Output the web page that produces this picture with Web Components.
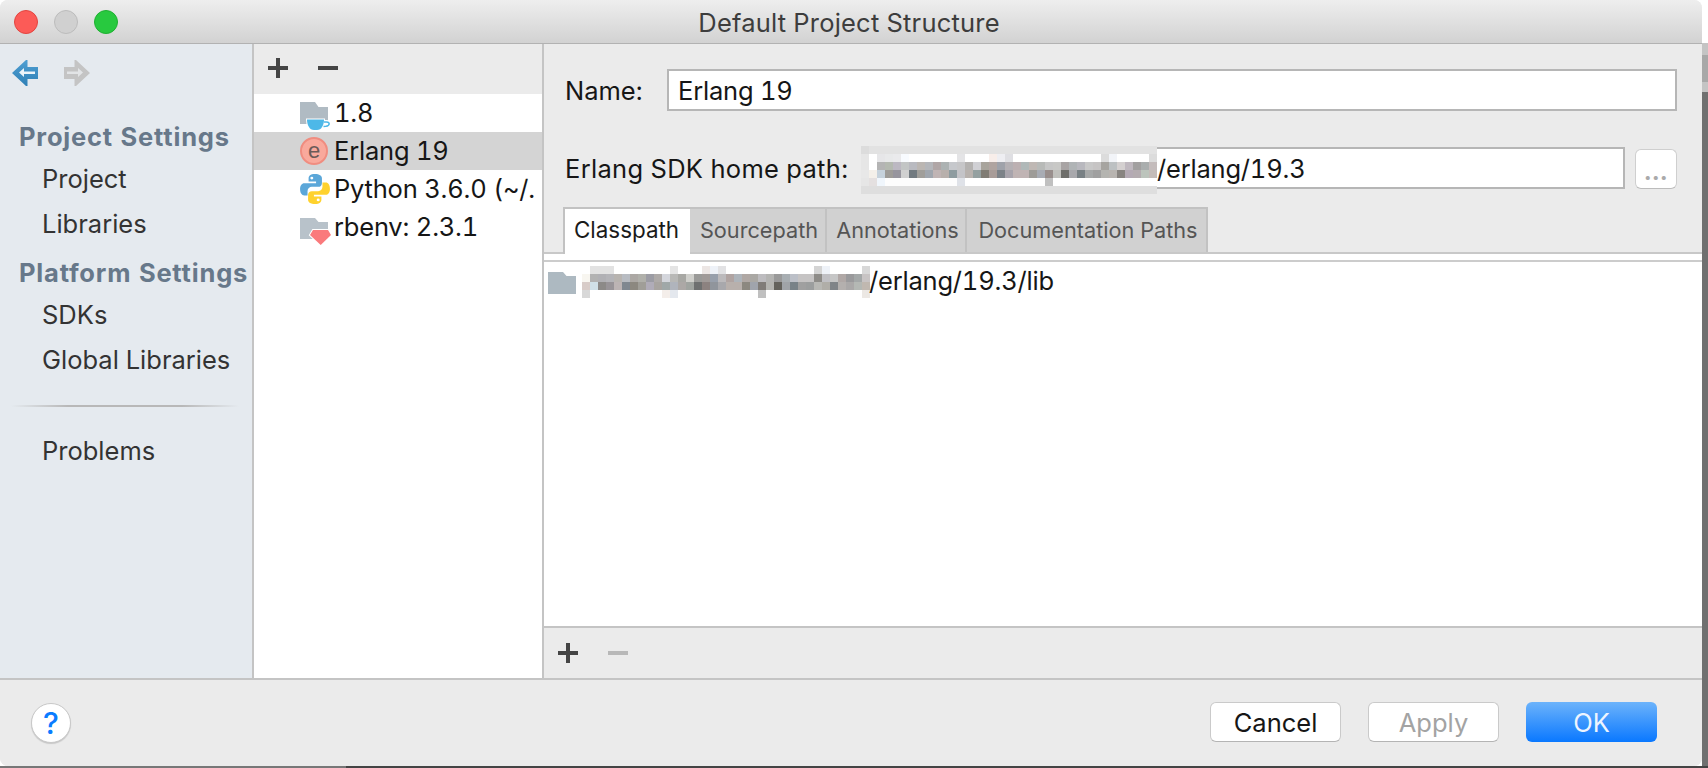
<!DOCTYPE html>
<html lang="en">
<head>
<meta charset="utf-8">
<title>Default Project Structure</title>
<style>
    html, body { margin: 0; height: 100%; }
    body {
        font-family: Inter, "Liberation Sans", sans-serif;
        font-variant-numeric: tabular-nums;
        overflow: hidden;
        /* desktop showing round the dialog */
        background:
            linear-gradient(#777, #777) 0 766px / 346px 2px no-repeat,
            linear-gradient(#444, #444) 346px 766px / 1362px 2px no-repeat,
            linear-gradient(#fff 0 43px, #c4c4c4 43px 55px, #a8a8a8 55px 82px, #c4c4c4 82px 92px, #707070 92px) 1702px 0 / 6px 768px no-repeat,
            #fff;
    }
</style>
</head>
<body>
<ps-window>
    <ps-titlebar slot="title" title="Default Project Structure"></ps-titlebar>

    <ps-sidebar slot="sidebar">
        <ps-nav-header>Project Settings</ps-nav-header>
        <ps-nav-item>Project</ps-nav-item>
        <ps-nav-item>Libraries</ps-nav-item>
        <ps-nav-header second>Platform Settings</ps-nav-header>
        <ps-nav-item>SDKs</ps-nav-item>
        <ps-nav-item>Global Libraries</ps-nav-item>
        <ps-nav-divider></ps-nav-divider>
        <ps-nav-item>Problems</ps-nav-item>
    </ps-sidebar>

    <ps-sdk-list slot="list">
        <ps-tree-row icon="java">1.8</ps-tree-row>
        <ps-tree-row icon="erlang" selected>Erlang 19</ps-tree-row>
        <ps-tree-row icon="python">Python 3.6.0 (~/.</ps-tree-row>
        <ps-tree-row icon="ruby">rbenv: 2.3.1</ps-tree-row>
    </ps-sdk-list>

    <ps-sdk-detail slot="detail">
        <ps-field label="Name:" value="Erlang 19"></ps-field>
        <ps-field label="Erlang SDK home path:" value="/erlang/19.3" masked browse></ps-field>
        <ps-tabs>
            <ps-tab active style="width:127px">Classpath</ps-tab>
            <ps-tab style="width:137px">Sourcepath</ps-tab>
            <ps-tab style="width:140px">Annotations</ps-tab>
            <ps-tab style="width:241px">Documentation Paths</ps-tab>
        </ps-tabs>
        <ps-path-list path="/erlang/19.3/lib"></ps-path-list>
    </ps-sdk-detail>

    <ps-footer slot="footer">
        <ps-button>Cancel</ps-button>
        <ps-button disabled>Apply</ps-button>
        <ps-button primary>OK</ps-button>
    </ps-footer>
</ps-window>

<script>
const ICONS = {
    java: `<svg width="30" height="32" viewBox="0 0 30 32">
            <path d="M0 5h15l3.500 5H28v17H0z" fill="#b0bbc3"/>
            <path d="M24 25h2.500c2.200 0 3 1.200 2.500 2.500-.5 1.300-2.500 2-5.500 2" fill="none" stroke="#fff" stroke-width="4"/>
            <path d="M7 22.500h17c0 5.500-2.500 10.500-7 10.500h-3c-4.500 0-7-5-7-10.500z" fill="#4db8e8" stroke="#fff" stroke-width="2" paint-order="stroke"/>
            <path d="M24 25h2.500c2.200 0 3 1.200 2.500 2.500-.5 1.300-2.500 2-5.500 2" fill="none" stroke="#4db8e8" stroke-width="1.600"/>
        </svg>`,
    erlang: `<svg width="30" height="32" viewBox="0 0 30 32">
            <circle cx="14" cy="16" r="13" fill="#f9a99c" stroke="#f08d80" stroke-width="2"/>
            <text x="14" y="23" text-anchor="middle" font-family="'Liberation Sans', sans-serif" font-size="22" fill="#6b5a58">e</text>
        </svg>`,
    python: `<svg width="30" height="32" viewBox="0 0 28 30">
            <g transform="translate(0 1)">
                <path d="M14 0C9.500 0 8 2 8 4v3h7v1.500H4C1.500 8.500 0 11 0 14c0 3.500 1.500 6 4 6h3v-4c0-2.500 2-4 4-4h6c2 0 3.500-1.500 3.500-3.500V4C20.500 1.500 18 0 14 0z" fill="#5ba7d9"/>
                <circle cx="11" cy="3.800" r="1.400" fill="#fff"/>
                <g transform="rotate(180 14 14)">
                    <path d="M14 0C9.500 0 8 2 8 4v3h7v1.500H4C1.500 8.500 0 11 0 14c0 3.500 1.500 6 4 6h3v-4c0-2.500 2-4 4-4h6c2 0 3.500-1.500 3.500-3.500V4C20.500 1.500 18 0 14 0z" fill="#ffd22e"/>
                    <circle cx="11" cy="3.800" r="1.400" fill="#fff"/>
                </g>
            </g>
        </svg>`,
    ruby: `<svg width="30" height="32" viewBox="0 0 30 32">
            <path d="M0 7h15l3.500 4H28v17H0z" fill="#b8c2ca"/>
            <path d="M13 19h15l3 5-10.300 10L10 24z" fill="#fa7a7c" stroke="#fff" stroke-width="2" paint-order="stroke"/>
        </svg>`,
    folder: `<svg width="28" height="32" viewBox="0 0 28 32"><path d="M0 6h15l3.500 4H28v18H0z" fill="#adb9c1"/></svg>`
};

// Pixelated redaction blocks, one colour per cell
const MOSAICS = {
    home: [
        'dcdcdc e2e2e2 e2e2e2 e2e2e2 e2e2e2 e2e2e2 e2e2e2 e2e2e2 e2e2e2 e2e2e2 e2e2e2 e2e2e2 e2e2e2 e2e2e2 e2e2e2 e2e2e2 e2e2e2 e2e2e2 e2e2e2 e2e2e2 e2e2e2 e2e2e2 e2e2e2 e2e2e2 e2e2e2 e2e2e2 e2e2e2 e2e2e2 e2e2e2 e2e2e2 e2e2e2 e2e2e2 e2e2e2 e2e2e2 e2e2e2 e2e2e2 e2e2e2',
        'e6e6e6 ffffff e6e6e8 e8e9ea eaeaec f8fbff ffffff ffffff ffffff ffffff ffffff ffffff e4e4e6 ffffff ffffff ffffff f8eeea eeeef2 dfdfe3 ffffff ffffff ffffff ffffff ffffff ffffff ffffff ffffff ffffff ffffff ffffff dcdcdc f2f4f8 ffffff ffffff ffffff ffffff dcdcdc',
        'e6e6e6 ffffff b4b4b4 b4b9b0 bcb8c2 c2c5c5 b9bac0 bbb6b2 b4b6ba b0a6a6 acb2b2 c6c8cc c6c6c8 b4b2b0 d0d0d4 a8a49c b0a4a0 9fa2aa b4b0b4 bcb0b2 b0b8b8 bfb8b4 b8bab8 c6c6c6 c8c8c6 a8a4a4 b0b4b6 b8b8be c8c8c8 c6c4c4 a6a4a0 bcc0c2 d4d0d0 bfb8bf a2a0a0 aaaeae c4bcbc',
        'e8e8e8 f4f0ea c6d2dc 9e9c98 97959e d0d0d0 727a80 a09e9a a0a6ae c0b4b4 b8b0ac 8e9ca0 c4c4c8 b8b2ae 94a0a0 807c74 a89c98 7c8288 a8a4ac c0b4b4 c0b4b4 9e9c98 a8acb4 988e8c c0c0bc 6e6e6a a8a8ac 788084 a6a8a8 a0a0a0 b4b4b0 b8b4b0 888480 b4aab4 b4acb0 bcc4bc c4bcb8',
        'e6e6e6 e4e0e0 f0f6fc fdfdfd fdfdfd fdfdfd fdfdfd fdfdfd fdfdfd fdfdfd fdfdfd fdfdfd dfe2e8 ffffff ffffff ffffff ffffff ffffff ffffff ffffff ffffff ffffff ffffff c0c0c0 ffffff ffffff ffffff ffffff ffffff ffffff ffffff ffffff ffffff ffffff ffffff ffffff ffffff',
        'dedede dedede dedede dedede dedede dedede dedede dedede dedede dedede dedede dedede dedede dedede dedede dedede dedede dedede dedede dedede dedede dedede dedede dedede dedede dedede dedede dedede dedede dedede dedede dedede dedede dedede dedede dedede dedede'
    ],
    lib: [
        'ffffff e2e2e2 e2e2e2 e2e2e2 ffffff ffffff ffffff ffffff ffffff ffffff ffffff e4e4e4 ffffff ffffff ffffff ece6e4 eef2f8 e2e2e4 ffffff ffffff ffffff ffffff ffffff ffffff ffffff ffffff ffffff ffffff ffffff d4d4d4 eef2f8 ffffff ffffff ffffff ffffff d8d8d8',
        'f8f6f0 b2b2b2 b0b0b4 b4b4b8 b8b4b0 b8bcc2 aca8a4 b0b0aa 9c9ca4 aeaaa8 d4d6dc b8b8b6 a8a8a4 d0d0cc 9a9a98 a09a98 98a0ac bcbabc b0a4a2 aeb4ba b0a8a4 aaa8a4 bdbcbf b4b4b2 9a9a9a a8aeb2 bcc0c8 c6c4c4 c6c4c4 8e8c88 c0c0c4 c6c6c6 b0a8a6 9a9a9c a4a8a8 c8c4c4',
        'd8ccc8 d0e0e8 8c8a88 989498 bcb4b4 808890 8c8880 a09e98 b0acb8 a8a4a0 a0a8a8 b0b4bc aca8a6 a0a4a0 6e7070 8c8280 90959c a8a8ac b8b0ac b8b0ac 8c8880 a0a4ac 807c78 b4b4b0 64625c a0a4a8 788288 a0a0a0 9c9e9e b8b8b4 b0aea8 808488 b4b0ae aaa8a8 b4b8b4 c0b8b0',
        'd8d8d8 ffffff ffffff ffffff ffffff ffffff ffffff ffffff ffffff ffffff f4eeea e4e8ee ffffff ffffff ffffff ffffff ffffff ffffff ffffff ffffff ffffff ffffff c0c0c0 ffffff ffffff ffffff ffffff ffffff ffffff ffffff ffffff ffffff ffffff ffffff ffffff ece8e4'
    ]
};

class PsWindow extends HTMLElement {
    constructor() {
        super();
        this.attachShadow({ mode: 'open' });
        this.shadowRoot.innerHTML = `
            <style>
                :host {
                    display: grid;
                    grid-template-rows: 44px 634px 88px;
                    width: 1702px;
                    height: 766px;
                    border-radius: 8px;
                    overflow: hidden;
                    background: #ebebeb;
                }
                .body { display: flex; min-height: 0; }
            </style>
            <slot name="title"></slot>
            <div class="body">
                <slot name="sidebar"></slot>
                <slot name="list"></slot>
                <slot name="detail"></slot>
            </div>
            <slot name="footer"></slot>
        `;
    }
}

class PsTitlebar extends HTMLElement {
    constructor() {
        super();
        this.attachShadow({ mode: 'open' });
    }

    connectedCallback() {
        this.shadowRoot.innerHTML = `
            <style>
                :host {
                    display: grid;
                    grid-template-columns: 1fr auto 1fr;
                    align-items: center;
                    box-sizing: border-box;
                    height: 44px;
                    padding: 0 18px 0 14px;
                    background: linear-gradient(#eeeeee, #d2d2d2);
                    border-bottom: 1px solid #b2b2b2;
                }
                .lights { display: flex; gap: 16px; }
                .lights span {
                    box-sizing: border-box;
                    width: 24px;
                    height: 24px;
                    border-radius: 50%;
                }
                .red { background: #fc5b57; border: 1px solid #e3443f; }
                .grey { background: #d0d0d0; border: 1px solid #bcbcbc; }
                .green { background: #28c93f; border: 1px solid #1fb032; }
                .title {
                    padding-top: 2px;
                    font-size: 25.500px;
                    letter-spacing: 0.200px;
                    color: #3d3d3d;
                    white-space: nowrap;
                }
            </style>
            <div class="lights"><span class="red"></span><span class="grey"></span><span class="green"></span></div>
            <div class="title">${this.getAttribute('title') || ''}</div>
        `;
    }
}

class PsSidebar extends HTMLElement {
    constructor() {
        super();
        this.attachShadow({ mode: 'open' });
        this.shadowRoot.innerHTML = `
            <style>
                :host {
                    display: block;
                    box-sizing: border-box;
                    width: 254px;
                    height: 100%;
                    background: #e5eaef;
                    border-right: 2px solid #c4c4c4;
                }
                .nav {
                    display: flex;
                    gap: 26px;
                    padding: 16px 0 31px 12px;
                    height: 26px;
                }
            </style>
            <div class="nav">
                <svg width="26" height="26" viewBox="0 0 26 26">
                    <defs><linearGradient id="b" x1="0" y1="0" x2="0" y2="1"><stop offset="0" stop-color="#4f9fd2"/><stop offset="1" stop-color="#2f80b6"/></linearGradient></defs>
                    <path d="M0 13 14 0h1.500v7H26v12H15.500v7H14z" fill="url(#b)"/>
                    <path d="M7 12.500 12 8v3.500h11V14H12v3z" fill="#fff" opacity=".9"/>
                </svg>
                <svg width="26" height="26" viewBox="0 0 26 26">
                    <path d="M26 13 12 0h-1.500v7H0v12h10.500v7H12z" fill="#c4c4c4"/>
                    <path d="M19 12.500 14 8v3.500H3V14h11v3z" fill="#e2e4e6"/>
                </svg>
            </div>
            <slot></slot>
        `;
    }
}

class PsNavHeader extends HTMLElement {
    constructor() {
        super();
        this.attachShadow({ mode: 'open' });
        this.shadowRoot.innerHTML = `
            <style>
                :host {
                    display: block;
                    height: 40px;
                    line-height: 40px;
                    padding-left: 19px;
                    font-size: 25.500px;
                    font-weight: 700;
                    letter-spacing: 0.800px;
                    color: #67788a;
                    white-space: nowrap;
                }
                :host([second]) { margin-top: 6px; }
            </style>
            <slot></slot>
        `;
    }
}

class PsNavItem extends HTMLElement {
    constructor() {
        super();
        this.attachShadow({ mode: 'open' });
        this.shadowRoot.innerHTML = `
            <style>
                :host {
                    display: block;
                    height: 45px;
                    line-height: 44px;
                    padding-left: 42px;
                    font-size: 25.500px;
                    color: #333;
                    white-space: nowrap;
                }
            </style>
            <slot></slot>
        `;
    }
}

class PsNavDivider extends HTMLElement {
    constructor() {
        super();
        this.attachShadow({ mode: 'open' });
        this.shadowRoot.innerHTML = `
            <style>
                :host {
                    display: block;
                    height: 2px;
                    margin: 22px 13px 22px 11px;
                    background: linear-gradient(90deg, #e5eaef, #b8b8b8 25%, #b8b8b8 75%, #e5eaef);
                }
            </style>
        `;
    }
}

class PsSdkList extends HTMLElement {
    constructor() {
        super();
        this.attachShadow({ mode: 'open' });
        this.shadowRoot.innerHTML = `
            <style>
                :host {
                    display: flex;
                    flex-direction: column;
                    box-sizing: border-box;
                    width: 290px;
                    height: 100%;
                    background: #fff;
                    border-right: 2px solid #c4c4c4;
                }
                .toolbar {
                    display: flex;
                    align-items: center;
                    gap: 30px;
                    box-sizing: border-box;
                    height: 50px;
                    padding: 0 0 2px 14px;
                    background: #ebebeb;
                }
            </style>
            <div class="toolbar">
                <svg width="20" height="20" viewBox="0 0 20 20"><path d="M8 0h4v8h8v4h-8v8H8v-8H0V8h8z" fill="#444"/></svg>
                <svg width="20" height="20" viewBox="0 0 20 20"><path d="M0 8h20v4H0z" fill="#444"/></svg>
            </div>
            <slot></slot>
        `;
    }
}

class PsTreeRow extends HTMLElement {
    constructor() {
        super();
        this.attachShadow({ mode: 'open' });
    }

    connectedCallback() {
        const icon = ICONS[this.getAttribute('icon')] || '';
        this.shadowRoot.innerHTML = `
            <style>
                :host {
                    display: flex;
                    align-items: center;
                    gap: 4px;
                    height: 38px;
                    padding-left: 46px;
                    font-size: 25.500px;
                    letter-spacing: -0.200px;
                    line-height: 36px;
                    color: #161616;
                    white-space: nowrap;
                    overflow: hidden;
                }
                :host([selected]) { background: #d4d4d4; }
                svg { flex: none; overflow: visible; }
                slot { display: block; height: 36px; }
            </style>
            ${icon}<slot></slot>
        `;
    }
}

class PsSdkDetail extends HTMLElement {
    constructor() {
        super();
        this.attachShadow({ mode: 'open' });
        this.shadowRoot.innerHTML = `
            <style>
                :host {
                    display: flex;
                    flex-direction: column;
                    flex: 1;
                    min-width: 0;
                    height: 100%;
                    padding-top: 25px;
                    box-sizing: border-box;
                }
            </style>
            <slot></slot>
        `;
    }
}

class PsMosaic extends HTMLElement {
    constructor() {
        super();
        this.attachShadow({ mode: 'open' });
    }

    connectedCallback() {
        const rows = MOSAICS[this.getAttribute('set')] || [];
        const cells = rows.map(r => r.split(' ').map(c => `<i style="background:#${c}"></i>`).join('')).join('');
        const cols = rows.length ? rows[0].split(' ').length : 0;
        this.shadowRoot.innerHTML = `
            <style>
                :host {
                    display: grid;
                    grid-template-columns: repeat(${cols}, 8px);
                    grid-auto-rows: 8px;
                }
            </style>
            ${cells}
        `;
    }
}

class PsField extends HTMLElement {
    constructor() {
        super();
        this.attachShadow({ mode: 'open' });
    }

    connectedCallback() {
        const masked = this.hasAttribute('masked');
        const browse = this.hasAttribute('browse');
        this.shadowRoot.innerHTML = `
            <style>
                :host {
                    display: flex;
                    align-items: center;
                    height: 42px;
                    padding: 0 25px 0 21px;
                    font-size: 25.500px;
                    color: #161616;
                    white-space: nowrap;
                }
                :host([masked]) { margin-top: 36px; }
                .label { width: 102px; flex: none; }
                :host([masked]) .label { width: 296px; letter-spacing: 0.300px; }
                .input {
                    position: relative;
                    flex: 1;
                    display: flex;
                    align-items: center;
                    box-sizing: border-box;
                    height: 42px;
                    padding-left: 9px;
                    letter-spacing: -0.200px;
                    background: #fff;
                    border: 2px solid #b6b6b6;
                }
                :host([masked]) .input { padding-left: 294px; }
                ps-mosaic { position: absolute; left: -2px; top: -3px; }
                .browse {
                    box-sizing: border-box;
                    flex: none;
                    width: 42px;
                    height: 40px;
                    margin: 2px 0 0 10px;
                    background: #fff;
                    border: 1px solid #cfcfcf;
                    border-bottom-color: #bcbcbc;
                    border-radius: 6px;
                    color: #aaa;
                    font-size: 24px;
                    font-weight: 700;
                    letter-spacing: 1.500px;
                    line-height: 44px;
                    text-align: center;
                    text-indent: 1px;
                }
            </style>
            <div class="label">${this.getAttribute('label') || ''}</div>
            <div class="input">${masked ? '<ps-mosaic set="home"></ps-mosaic>' : ''}<span>${this.getAttribute('value') || ''}</span></div>
            ${browse ? '<div class="browse">...</div>' : ''}
        `;
    }
}

class PsTabs extends HTMLElement {
    constructor() {
        super();
        this.attachShadow({ mode: 'open' });
        this.shadowRoot.innerHTML = `
            <style>
                :host {
                    display: flex;
                    box-sizing: border-box;
                    height: 47px;
                    margin-top: 18px;
                    padding-left: 19px;
                    border-bottom: 2px solid #c8c8c8;
                }
            </style>
            <slot></slot>
        `;
    }
}

class PsTab extends HTMLElement {
    constructor() {
        super();
        this.attachShadow({ mode: 'open' });
        this.shadowRoot.innerHTML = `
            <style>
                :host {
                    display: block;
                    box-sizing: border-box;
                    height: 45px;
                    line-height: 42px;
                    padding-left: 3px;
                    text-align: center;
                    font-size: 21.700px;
                    color: #555;
                    white-space: nowrap;
                    background: #d1d1d1;
                    border-top: 2px solid #c2c2c2;
                    border-right: 2px solid #c2c2c2;
                }
                :host([active]) {
                    height: 47px;
                    margin-bottom: -2px;
                    padding: 0 2px 0 0;
                    background: #fff;
                    color: #1a1a1a;
                    font-size: 22.400px;
                    border-left: 2px solid #c2c2c2;
                    border-right: 0;
                }
            </style>
            <slot></slot>
        `;
    }
}

class PsPathList extends HTMLElement {
    constructor() {
        super();
        this.attachShadow({ mode: 'open' });
    }

    connectedCallback() {
        this.shadowRoot.innerHTML = `
            <style>
                :host {
                    display: flex;
                    flex-direction: column;
                    flex: 1;
                    min-height: 0;
                    box-sizing: border-box;
                    padding-top: 6px;
                    background: #fff;
                }
                .rows {
                    flex: 1;
                    border-top: 2px solid #cccccc;
                    border-bottom: 2px solid #c4c4c4;
                }
                .row {
                    display: flex;
                    align-items: center;
                    height: 32px;
                    margin-top: 4px;
                    padding-left: 4px;
                    font-size: 25.500px;
                    letter-spacing: -0.200px;
                    color: #161616;
                }
                .row svg { margin-right: 6px; }
                .row span { margin: -3px 0 0 -1px; }
                .toolbar {
                    display: flex;
                    align-items: center;
                    gap: 30px;
                    height: 50px;
                    padding-left: 14px;
                    background: #ebebeb;
                }
            </style>
            <div class="rows">
                <div class="row">${ICONS.folder}<ps-mosaic set="lib"></ps-mosaic><span>${this.getAttribute('path') || ''}</span></div>
            </div>
            <div class="toolbar">
                <svg width="20" height="20" viewBox="0 0 20 20"><path d="M8 0h4v8h8v4h-8v8H8v-8H0V8h8z" fill="#444"/></svg>
                <svg width="20" height="20" viewBox="0 0 20 20"><path d="M0 8h20v4H0z" fill="#b8b8b8"/></svg>
            </div>
        `;
    }
}

class PsFooter extends HTMLElement {
    constructor() {
        super();
        this.attachShadow({ mode: 'open' });
        this.shadowRoot.innerHTML = `
            <style>
                :host {
                    display: flex;
                    align-items: center;
                    gap: 27px;
                    box-sizing: border-box;
                    height: 88px;
                    padding: 0 45px 0 31px;
                    background: #ebebeb;
                    border-top: 2px solid #c4c4c4;
                }
                .help {
                    box-sizing: border-box;
                    width: 40px;
                    height: 40px;
                    margin-right: auto;
                    background: #fff;
                    border: 1px solid #c8c8c8;
                    border-radius: 50%;
                    box-shadow: 0 1px 1px rgba(0,0,0,0.15);
                    color: #0a7cff;
                    font-size: 30px;
                    font-weight: 500;
                    line-height: 38px;
                    text-align: center;
                }
            </style>
            <div class="help">?</div>
            <slot></slot>
        `;
    }
}

class PsButton extends HTMLElement {
    constructor() {
        super();
        this.attachShadow({ mode: 'open' });
        this.shadowRoot.innerHTML = `
            <style>
                :host {
                    display: block;
                    box-sizing: border-box;
                    width: 131px;
                    height: 40px;
                    margin-top: -2px;
                    background: #fff;
                    border: 1px solid #cacaca;
                    border-bottom-color: #b4b4b4;
                    border-radius: 6px;
                    font-size: 25.500px;
                    line-height: 40px;
                    text-align: center;
                    color: #161616;
                }
                :host([disabled]) { color: #a3a3a3; }
                :host([primary]) {
                    border: 0;
                    line-height: 42px;
                    color: #eef5ff;
                    background: linear-gradient(#6cb3fb, #0a78ff);
                }
            </style>
            <slot></slot>
        `;
    }
}

customElements.define('ps-window', PsWindow);
customElements.define('ps-titlebar', PsTitlebar);
customElements.define('ps-sidebar', PsSidebar);
customElements.define('ps-nav-header', PsNavHeader);
customElements.define('ps-nav-item', PsNavItem);
customElements.define('ps-nav-divider', PsNavDivider);
customElements.define('ps-sdk-list', PsSdkList);
customElements.define('ps-tree-row', PsTreeRow);
customElements.define('ps-sdk-detail', PsSdkDetail);
customElements.define('ps-mosaic', PsMosaic);
customElements.define('ps-field', PsField);
customElements.define('ps-tabs', PsTabs);
customElements.define('ps-tab', PsTab);
customElements.define('ps-path-list', PsPathList);
customElements.define('ps-footer', PsFooter);
customElements.define('ps-button', PsButton);
</script>
</body>
</html>
